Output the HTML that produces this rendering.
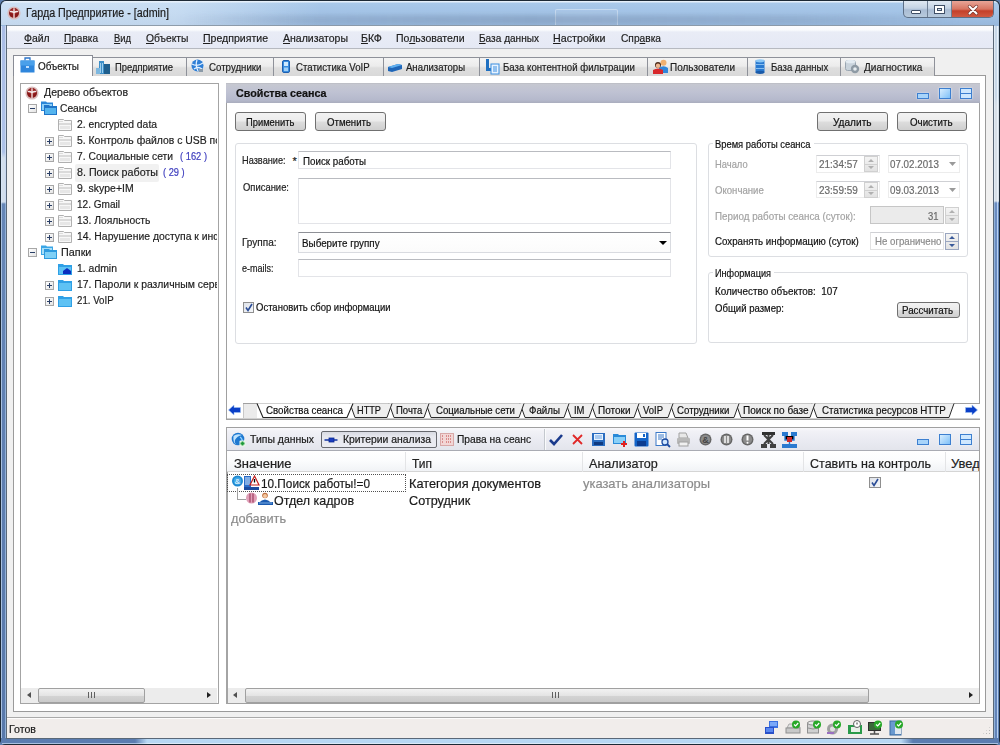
<!DOCTYPE html><html><head><meta charset='utf-8'><style>
*{box-sizing:border-box;margin:0;padding:0}
html,body{width:1000px;height:745px;overflow:hidden;background:#5d7fae}
body{position:relative;font-family:"Liberation Sans",sans-serif;color:#1e1e1e}
.a{position:absolute}
.t{position:absolute;white-space:nowrap;line-height:1;-webkit-text-stroke:0.2px currentColor}
.tab{position:absolute;height:19px;top:57px;border:1px solid #8e9199;border-bottom:none;background:linear-gradient(180deg,#f4f4f4,#ececec 45%,#dedede 55%,#d9d9d9)}
.btn{position:absolute;border:1px solid #707070;border-radius:3px;background:linear-gradient(180deg,#f2f2f2,#ebebeb 48%,#dddddd 52%,#cfcfcf)}
.gb{position:absolute;border:1px solid #dcdee2;border-radius:3px}
.inp{position:absolute;border:1px solid #e3e4e8;border-top-color:#b9bbc0;background:#fff}
.spin{position:absolute;border:1px solid #d6d6d6;background:linear-gradient(180deg,#f4f4f4,#e2e2e2)}
.sb{position:absolute;height:15px;background:#ececec}
.thumb{position:absolute;border:1px solid #a0a0a0;border-radius:2px;background:linear-gradient(180deg,#f2f2f2,#e4e4e4 50%,#d4d4d4 51%,#cacaca)}
svg{position:absolute;overflow:visible}
</style></head><body>
<div class='a' style='left:0;top:0;width:1000px;height:745px;background:#1d2a36;border-radius:6px 6px 5px 5px'></div>
<div class='a' style='left:1px;top:1px;width:998px;height:25px;border-radius:5px 5px 0 0;background:linear-gradient(180deg,#e6f0fa 0,#e6f0fa 1px,#a9c9ea 2px,#a3c3e6 12px,#98b8dc 24px)'></div>
<div class='a' style='left:1px;top:26px;width:6px;height:718px;background:linear-gradient(180deg,#aabde6 0,#aec2e8 126px,#d2deec 132px,#d2deec 176px,#6686b6 178px,#6080b2 400px,#5878aa 718px)'></div>
<div class='a' style='left:1px;top:26px;width:1px;height:718px;background:linear-gradient(180deg,#d8e6f6,#d8e6f6 176px,#a8c0e0 178px,#a8c0e0)'></div>
<div class='a' style='left:5px;top:26px;width:1px;height:718px;background:linear-gradient(180deg,#c8d8f0,#c8d8f0 176px,#90b0d8 178px,#90b0d8)'></div>
<div class='a' style='left:993px;top:26px;width:6px;height:718px;background:linear-gradient(180deg,#c8d8e8 0,#c8d8e8 70px,#d8e0e8 80px,#d8e0e8 175px,#6a8cc0 177px,#6284b8 718px)'></div>
<div class='a' style='left:994px;top:26px;width:1px;height:718px;background:linear-gradient(180deg,#e0eaf4,#e0eaf4 175px,#90b0d8 177px,#90b0d8)'></div>
<div class='a' style='left:997px;top:26px;width:1px;height:718px;background:linear-gradient(180deg,#e8f0f8,#e8f0f8 175px,#b8d0f0 177px,#b8d0f0)'></div>
<div class='a' style='left:1px;top:738px;width:998px;height:6px;background:linear-gradient(90deg,#5a7cb0 0,#5a7cb0 134px,#b8d8f4 146px,#b8d8f4 900px,#5a7cb0 912px,#5a7cb0 100%)'></div>
<div class='a' style='left:2px;top:743px;width:996px;height:1px;background:linear-gradient(90deg,#a8c0e0 0,#a8c0e0 134px,#dceaf8 146px,#dceaf8 900px,#a8c0e0 912px,#a8c0e0 100%)'></div>
<div class='a' style='left:6px;top:25px;width:988px;height:714px;border:1px solid #5a6878;background:#f0f0f0'></div>
<div class='a' style='left:7px;top:25px;width:986px;height:1px;background:#8e9caa'></div>
<div class='a' style='left:1px;top:2px;width:330px;height:23px;border-radius:5px 0 0 0;background:linear-gradient(90deg,rgba(240,248,255,.5) 0,rgba(240,248,255,.45) 175px,rgba(240,248,255,0) 320px)'></div>
<!-- blurred shapes in titlebar -->
<div class='a' style='left:555px;top:9px;width:63px;height:16px;border:1px solid rgba(225,235,248,.55);border-bottom:none;border-radius:2px 2px 0 0;background:rgba(200,215,235,.15)'></div>
<div class='a' style='left:180px;top:15px;width:780px;height:9px;background:linear-gradient(90deg,rgba(110,130,160,0),rgba(110,130,160,.22) 15%,rgba(100,120,150,.3) 45%,rgba(110,130,160,.22) 80%,rgba(110,130,160,0));filter:blur(2px)'></div>
<!-- caption buttons -->
<div class='a' style='left:903px;top:1px;width:91px;height:17px;border:1px solid #5d6f86;border-top:none;border-radius:0 0 5px 5px;overflow:hidden;background:linear-gradient(180deg,#dfe8f2,#c4d3e4 45%,#a9bcd4 55%,#b8cadc)'>
  <div class='a' style='left:23px;top:0;width:1px;height:18px;background:#6e7f94'></div>
  <div class='a' style='left:47px;top:0;width:1px;height:18px;background:#6e7f94'></div>
  <div class='a' style='left:48px;top:0;width:42px;height:18px;background:linear-gradient(180deg,#e8a597,#d77562 45%,#c4402a 55%,#d4624a)'></div>
  <div class='a' style='left:7px;top:9px;width:10px;height:4px;background:#fff;border:1px solid #3f4f66;border-radius:1px'></div>
  <div class='a' style='left:30px;top:4px;width:11px;height:9px;border:1px solid #3f4f66;background:#fff'><div class='a' style='left:2px;top:2px;width:5px;height:3px;border:1px solid #3f4f66;background:#d8e2ee'></div></div>
  <svg style='left:64px;top:4px' width='10' height='10' viewBox='0 0 10 10'><path d='M1.5 1.5 L8.5 8.5 M8.5 1.5 L1.5 8.5' stroke='#7a3a32' stroke-width='3.4' stroke-linecap='round'/><path d='M1.5 1.5 L8.5 8.5 M8.5 1.5 L1.5 8.5' stroke='#fff' stroke-width='2' stroke-linecap='round'/></svg>
</div>
<!-- title icon -->
<svg style='left:7px;top:6px' width='14' height='14' viewBox='0 0 14 14'>
 <circle cx='7' cy='7' r='6.6' fill='#d9bdbd'/><circle cx='7' cy='7' r='5' fill='#8a1818'/><circle cx='7' cy='5.5' r='3' fill='#b03a3a' opacity='.6'/>
 <path d='M7 2.2 V12 M2.8 5.6 Q5 5.2 7 6.8 Q9 5.2 11.2 5.6' stroke='#f4e8e8' stroke-width='1.3' fill='none'/>
</svg>
<div class='t' style='left:26px;top:7.30px;font-size:12px;color:#1b1b1b;transform:scaleX(0.894);transform-origin:0 0;'>Гарда Предприятие - [admin]</div>
<div class='a' style='left:7px;top:26px;width:986px;height:23px;background:linear-gradient(180deg,#fdfdfe 0,#fafbfd 4px,#e9ecf6 6px,#e5e9f5 22px);border-bottom:1px solid #b6b9c0'></div>
<div class='t' style='left:24px;top:32.65px;font-size:11px;color:#1e1e1e;transform:scaleX(0.946);transform-origin:0 0;'><span style='text-decoration:underline;text-underline-offset:1px'>Ф</span>айл</div><div class='t' style='left:64.4px;top:32.65px;font-size:11px;color:#1e1e1e;transform:scaleX(0.915);transform-origin:0 0;'><span style='text-decoration:underline;text-underline-offset:1px'>П</span>равка</div><div class='t' style='left:113.6px;top:32.65px;font-size:11px;color:#1e1e1e;transform:scaleX(0.853);transform-origin:0 0;'><span style='text-decoration:underline;text-underline-offset:1px'>В</span>ид</div><div class='t' style='left:145.6px;top:32.65px;font-size:11px;color:#1e1e1e;transform:scaleX(0.934);transform-origin:0 0;'><span style='text-decoration:underline;text-underline-offset:1px'>О</span>бъекты</div><div class='t' style='left:203px;top:32.65px;font-size:11px;color:#1e1e1e;transform:scaleX(0.959);transform-origin:0 0;'><span style='text-decoration:underline;text-underline-offset:1px'>П</span>редприятие</div><div class='t' style='left:282.5px;top:32.65px;font-size:11px;color:#1e1e1e;transform:scaleX(0.955);transform-origin:0 0;'><span style='text-decoration:underline;text-underline-offset:1px'>А</span>нализаторы</div><div class='t' style='left:361px;top:32.65px;font-size:11px;color:#1e1e1e;transform:scaleX(0.962);transform-origin:0 0;'><span style='text-decoration:underline;text-underline-offset:1px'>Б</span>КФ</div><div class='t' style='left:396px;top:32.65px;font-size:11px;color:#1e1e1e;transform:scaleX(0.954);transform-origin:0 0;'>По<span style='text-decoration:underline;text-underline-offset:1px'>л</span>ьзователи</div><div class='t' style='left:478.8px;top:32.65px;font-size:11px;color:#1e1e1e;transform:scaleX(0.916);transform-origin:0 0;'><span style='text-decoration:underline;text-underline-offset:1px'>Б</span>аза данных</div><div class='t' style='left:553px;top:32.65px;font-size:11px;color:#1e1e1e;transform:scaleX(0.973);transform-origin:0 0;'><span style='text-decoration:underline;text-underline-offset:1px'>Н</span>астройки</div><div class='t' style='left:620.5px;top:32.65px;font-size:11px;color:#1e1e1e;transform:scaleX(0.927);transform-origin:0 0;'>Спр<span style='text-decoration:underline;text-underline-offset:1px'>а</span>вка</div>
<div class='a' style='left:13px;top:75px;width:973px;height:637px;border:1px solid #9a9a9a;background:#fff'></div>
<div class='tab' style='left:92px;width:95px'></div>
<div class='tab' style='left:186px;width:88px'></div>
<div class='tab' style='left:273px;width:111px'></div>
<div class='tab' style='left:383px;width:97px'></div>
<div class='tab' style='left:479px;width:169px'></div>
<div class='tab' style='left:647px;width:101px'></div>
<div class='tab' style='left:747px;width:94px'></div>
<div class='tab' style='left:840px;width:95px'></div>
<div class='a' style='left:13px;top:55px;width:80px;height:21px;border:1px solid #898c95;border-bottom:none;background:#fff'></div>
<!-- tab icons -->
<svg style='left:20px;top:56px' width='15' height='17' viewBox='0 0 15 17'>
 <path d='M5 4.5 V2 H10 V4.5' stroke='#2c74c9' stroke-width='1.3' fill='none'/>
 <rect x='0.5' y='4.5' width='14' height='12' fill='#2f86dc'/><rect x='0.5' y='4.5' width='14' height='5' fill='#4aa0ea'/>
 <rect x='6' y='10' width='3' height='2' fill='#bfe0ff'/>
</svg>
<svg style='left:96px;top:60px' width='15' height='14' viewBox='0 0 15 14'>
 <rect x='3' y='1' width='5' height='13' fill='#3c8ec8'/><rect x='8' y='4' width='6' height='10' fill='#1f5f8e'/>
 <rect x='0' y='8' width='4' height='6' fill='#7db8e0'/>
 <path d='M4.5 3 V13 M6.5 3 V13' stroke='#b8e0f8' stroke-width='.8'/>
</svg>
<svg style='left:191px;top:59px' width='13' height='14' viewBox='0 0 13 14'>
 <circle cx='6.5' cy='6.5' r='6' fill='#2f7fd6'/><path d='M1 5 Q6 8 12 4 M3 10 Q7 7 11 10 M6 1 Q4 6 7 12' stroke='#e4f2ff' stroke-width='1.3' fill='none'/>
 <rect x='8' y='10' width='4' height='3' fill='#8a9aa8'/>
</svg>
<svg style='left:282px;top:60px' width='8' height='13' viewBox='0 0 8 13'>
 <rect x='0.5' y='0.5' width='7' height='12' rx='1.5' fill='#3a8ee0' stroke='#1d5fb0'/><rect x='2' y='2' width='4' height='4' fill='#cfeaff'/>
 <rect x='2' y='7.5' width='4' height='3.5' fill='#9fd0f8'/>
</svg>
<svg style='left:387px;top:61px' width='16' height='12' viewBox='0 0 16 12'>
 <path d='M1 6 L11 3 L15 4 L15 8 L5 11 L1 10 Z' fill='#1f66b8'/><path d='M1 6 L11 3 L15 4 L5 7 Z' fill='#5fb0f0'/>
</svg>
<svg style='left:485px;top:59px' width='14' height='15' viewBox='0 0 14 15'>
 <rect x='1' y='0' width='3' height='10' fill='#1e6fc0'/><rect x='1' y='9' width='6' height='3' fill='#1e6fc0'/>
 <rect x='6' y='5' width='8' height='10' fill='#e8f3ff' stroke='#3a8ee0'/><path d='M8 8 H12 M8 10 H12 M8 12 H12' stroke='#3a8ee0'/>
</svg>
<svg style='left:653px;top:59px' width='16' height='15' viewBox='0 0 16 15'>
 <circle cx='10.5' cy='3.8' r='3' fill='#f0b070'/><path d='M6 14 V9 Q10.5 5.5 15 9 V14 Z' fill='#2f86dc'/>
 <circle cx='5' cy='6' r='3' fill='#4a2a1a'/><circle cx='5' cy='6.8' r='2.2' fill='#f0b890'/><path d='M0 15 V11 Q5 8 10 11 V15 Z' fill='#d8282c'/>
</svg>
<svg style='left:755px;top:59px' width='10' height='15' viewBox='0 0 10 15'>
 <rect x='0.5' y='1.5' width='9' height='12' fill='#2a7ad0'/><ellipse cx='5' cy='1.8' rx='4.5' ry='1.6' fill='#8cc8f6'/><ellipse cx='5' cy='13.3' rx='4.5' ry='1.6' fill='#1a5aa8'/>
 <path d='M1 5.5 H9 M1 9.5 H9' stroke='#9fd0f8' stroke-width='.8'/>
</svg>
<svg style='left:845px;top:59px' width='15' height='15' viewBox='0 0 15 15'>
 <rect x='0.5' y='1.5' width='10' height='10' rx='2' fill='#c9d3dc' stroke='#9aa6b2'/><ellipse cx='5.5' cy='2.5' rx='5' ry='1.8' fill='#e3ebf2'/>
 <circle cx='10' cy='10' r='4.2' fill='#8e9aa4'/><circle cx='10' cy='10' r='1.8' fill='#e6ecf0'/>
</svg>
<div class='t' style='left:38px;top:61.45px;font-size:11px;color:#1a1a1a;transform:scaleX(0.904);transform-origin:0 0;'>Объекты</div><div class='t' style='left:114.8px;top:61.75px;font-size:11px;transform:scaleX(0.855);transform-origin:0 0;'>Предприятие</div><div class='t' style='left:208.5px;top:61.75px;font-size:11px;transform:scaleX(0.881);transform-origin:0 0;'>Сотрудники</div><div class='t' style='left:296px;top:61.75px;font-size:11px;transform:scaleX(0.877);transform-origin:0 0;'>Статистика VoIP</div><div class='t' style='left:406px;top:61.75px;font-size:11px;transform:scaleX(0.867);transform-origin:0 0;'>Анализаторы</div><div class='t' style='left:502.5px;top:61.75px;font-size:11px;transform:scaleX(0.877);transform-origin:0 0;'>База контентной фильтрации</div><div class='t' style='left:670px;top:61.75px;font-size:11px;transform:scaleX(0.905);transform-origin:0 0;'>Пользователи</div><div class='t' style='left:770.7px;top:61.75px;font-size:11px;transform:scaleX(0.874);transform-origin:0 0;'>База данных</div><div class='t' style='left:863.5px;top:61.75px;font-size:11px;transform:scaleX(0.917);transform-origin:0 0;'>Диагностика</div>
<div class='a' style='left:20px;top:83px;width:199px;height:621px;border:1px solid #a4a4a4;background:#fff'></div>
<div class='a' style='left:75px;top:164px;width:84px;height:18px;background:#f1f1f1;border-radius:2px'></div>
<svg style='left:25px;top:86px' width='14' height='14' viewBox='0 0 14 14'>
 <circle cx='7' cy='7' r='6.6' fill='#d9bdbd'/><circle cx='7' cy='7' r='5' fill='#8a1818'/><circle cx='7' cy='5.5' r='3' fill='#b03a3a' opacity='.6'/>
 <path d='M7 2.2 V12 M2.8 5.6 Q5 5.2 7 6.8 Q9 5.2 11.2 5.6' stroke='#f4e8e8' stroke-width='1.3' fill='none'/>
</svg>
<svg style='left:41px;top:101px' width='16' height='14' viewBox='0 0 16 14'>
 <path d='M0 0.5 H5 L6 1.5 H12 V10 H0 Z' fill='#2a86d8'/><rect x='1' y='3' width='10' height='6' fill='#8fd0f8'/>
 <path d='M3 4 H8 L9 5 H16 V14 H3 Z' fill='#1f74c8'/><rect x='4' y='7' width='11' height='6' fill='#54b4ee'/>
</svg>
<svg style='left:41px;top:245px' width='16' height='14' viewBox='0 0 16 14'>
 <path d='M0 0.5 H5 L6 1.5 H12 V10 H0 Z' fill='#3aa6e6'/><rect x='1' y='3' width='10' height='6' fill='#a8def8'/>
 <path d='M3 4 H8 L9 5 H16 V14 H3 Z' fill='#2d9ade'/><rect x='4' y='7' width='11' height='6' fill='#7fd0f6'/>
</svg>
<div class='a' style='left:28px;top:104px;width:9px;height:9px;border:1px solid #a7a7a7;background:linear-gradient(135deg,#fff,#e4e4e4)'></div><div class='a' style='left:30px;top:108px;width:5px;height:1px;background:#2a3f66'></div><div class='a' style='left:28px;top:248px;width:9px;height:9px;border:1px solid #a7a7a7;background:linear-gradient(135deg,#fff,#e4e4e4)'></div><div class='a' style='left:30px;top:252px;width:5px;height:1px;background:#2a3f66'></div><svg style='left:58px;top:119px' width='14' height='12' viewBox='0 0 14 12'><path d='M0.5 11.5 V0.5 H5.5 L6.5 1.5 H13.5 V11.5 Z' fill='#f7f7f7' stroke='#b0b0b0'/><path d='M1 5 H13' stroke='#bdbdbd'/><rect x='2' y='7' width='10' height='3' fill='#e6e6e6'/><path d='M1 2.5 H5' stroke='#dcdcdc'/></svg><svg style='left:58px;top:135px' width='14' height='12' viewBox='0 0 14 12'><path d='M0.5 11.5 V0.5 H5.5 L6.5 1.5 H13.5 V11.5 Z' fill='#f7f7f7' stroke='#b0b0b0'/><path d='M1 5 H13' stroke='#bdbdbd'/><rect x='2' y='7' width='10' height='3' fill='#e6e6e6'/><path d='M1 2.5 H5' stroke='#dcdcdc'/></svg><div class='a' style='left:45px;top:137px;width:9px;height:9px;border:1px solid #a7a7a7;background:linear-gradient(135deg,#fff,#e4e4e4)'></div><div class='a' style='left:47px;top:141px;width:5px;height:1px;background:#2a3f66'></div><div class='a' style='left:49px;top:139px;width:1px;height:5px;background:#2a3f66'></div><svg style='left:58px;top:151px' width='14' height='12' viewBox='0 0 14 12'><path d='M0.5 11.5 V0.5 H5.5 L6.5 1.5 H13.5 V11.5 Z' fill='#f7f7f7' stroke='#b0b0b0'/><path d='M1 5 H13' stroke='#bdbdbd'/><rect x='2' y='7' width='10' height='3' fill='#e6e6e6'/><path d='M1 2.5 H5' stroke='#dcdcdc'/></svg><div class='a' style='left:45px;top:153px;width:9px;height:9px;border:1px solid #a7a7a7;background:linear-gradient(135deg,#fff,#e4e4e4)'></div><div class='a' style='left:47px;top:157px;width:5px;height:1px;background:#2a3f66'></div><div class='a' style='left:49px;top:155px;width:1px;height:5px;background:#2a3f66'></div><svg style='left:58px;top:167px' width='14' height='12' viewBox='0 0 14 12'><path d='M0.5 11.5 V0.5 H5.5 L6.5 1.5 H13.5 V11.5 Z' fill='#f7f7f7' stroke='#b0b0b0'/><path d='M1 5 H13' stroke='#bdbdbd'/><rect x='2' y='7' width='10' height='3' fill='#e6e6e6'/><path d='M1 2.5 H5' stroke='#dcdcdc'/></svg><div class='a' style='left:45px;top:169px;width:9px;height:9px;border:1px solid #a7a7a7;background:linear-gradient(135deg,#fff,#e4e4e4)'></div><div class='a' style='left:47px;top:173px;width:5px;height:1px;background:#2a3f66'></div><div class='a' style='left:49px;top:171px;width:1px;height:5px;background:#2a3f66'></div><svg style='left:58px;top:183px' width='14' height='12' viewBox='0 0 14 12'><path d='M0.5 11.5 V0.5 H5.5 L6.5 1.5 H13.5 V11.5 Z' fill='#f7f7f7' stroke='#b0b0b0'/><path d='M1 5 H13' stroke='#bdbdbd'/><rect x='2' y='7' width='10' height='3' fill='#e6e6e6'/><path d='M1 2.5 H5' stroke='#dcdcdc'/></svg><div class='a' style='left:45px;top:185px;width:9px;height:9px;border:1px solid #a7a7a7;background:linear-gradient(135deg,#fff,#e4e4e4)'></div><div class='a' style='left:47px;top:189px;width:5px;height:1px;background:#2a3f66'></div><div class='a' style='left:49px;top:187px;width:1px;height:5px;background:#2a3f66'></div><svg style='left:58px;top:199px' width='14' height='12' viewBox='0 0 14 12'><path d='M0.5 11.5 V0.5 H5.5 L6.5 1.5 H13.5 V11.5 Z' fill='#f7f7f7' stroke='#b0b0b0'/><path d='M1 5 H13' stroke='#bdbdbd'/><rect x='2' y='7' width='10' height='3' fill='#e6e6e6'/><path d='M1 2.5 H5' stroke='#dcdcdc'/></svg><div class='a' style='left:45px;top:201px;width:9px;height:9px;border:1px solid #a7a7a7;background:linear-gradient(135deg,#fff,#e4e4e4)'></div><div class='a' style='left:47px;top:205px;width:5px;height:1px;background:#2a3f66'></div><div class='a' style='left:49px;top:203px;width:1px;height:5px;background:#2a3f66'></div><svg style='left:58px;top:215px' width='14' height='12' viewBox='0 0 14 12'><path d='M0.5 11.5 V0.5 H5.5 L6.5 1.5 H13.5 V11.5 Z' fill='#f7f7f7' stroke='#b0b0b0'/><path d='M1 5 H13' stroke='#bdbdbd'/><rect x='2' y='7' width='10' height='3' fill='#e6e6e6'/><path d='M1 2.5 H5' stroke='#dcdcdc'/></svg><div class='a' style='left:45px;top:217px;width:9px;height:9px;border:1px solid #a7a7a7;background:linear-gradient(135deg,#fff,#e4e4e4)'></div><div class='a' style='left:47px;top:221px;width:5px;height:1px;background:#2a3f66'></div><div class='a' style='left:49px;top:219px;width:1px;height:5px;background:#2a3f66'></div><svg style='left:58px;top:231px' width='14' height='12' viewBox='0 0 14 12'><path d='M0.5 11.5 V0.5 H5.5 L6.5 1.5 H13.5 V11.5 Z' fill='#f7f7f7' stroke='#b0b0b0'/><path d='M1 5 H13' stroke='#bdbdbd'/><rect x='2' y='7' width='10' height='3' fill='#e6e6e6'/><path d='M1 2.5 H5' stroke='#dcdcdc'/></svg><div class='a' style='left:45px;top:233px;width:9px;height:9px;border:1px solid #a7a7a7;background:linear-gradient(135deg,#fff,#e4e4e4)'></div><div class='a' style='left:47px;top:237px;width:5px;height:1px;background:#2a3f66'></div><div class='a' style='left:49px;top:235px;width:1px;height:5px;background:#2a3f66'></div><svg style='left:58px;top:263px' width='14' height='12' viewBox='0 0 14 12'><path d='M0 1 H5 L6 2 H14 V12 H0 Z' fill='#2fa0e6'/><rect x='1' y='4' width='12' height='7' fill='#5ec2f4'/><path d='M5 11 V8 L9 5 L13 8 V11 Z' fill='#0a2fbf'/></svg><svg style='left:58px;top:279px' width='14' height='12' viewBox='0 0 14 12'><path d='M0 1 H5 L6 2 H14 V12 H0 Z' fill='#2fa0e6'/><rect x='1' y='4' width='12' height='7' fill='#5ec2f4'/></svg><div class='a' style='left:45px;top:281px;width:9px;height:9px;border:1px solid #a7a7a7;background:linear-gradient(135deg,#fff,#e4e4e4)'></div><div class='a' style='left:47px;top:285px;width:5px;height:1px;background:#2a3f66'></div><div class='a' style='left:49px;top:283px;width:1px;height:5px;background:#2a3f66'></div><svg style='left:58px;top:295px' width='14' height='12' viewBox='0 0 14 12'><path d='M0 1 H5 L6 2 H14 V12 H0 Z' fill='#2fa0e6'/><rect x='1' y='4' width='12' height='7' fill='#5ec2f4'/></svg><div class='a' style='left:45px;top:297px;width:9px;height:9px;border:1px solid #a7a7a7;background:linear-gradient(135deg,#fff,#e4e4e4)'></div><div class='a' style='left:47px;top:301px;width:5px;height:1px;background:#2a3f66'></div><div class='a' style='left:49px;top:299px;width:1px;height:5px;background:#2a3f66'></div><div class='a' style='left:21px;top:84px;width:196px;height:600px;overflow:hidden'><div class='a' style='left:-21px;top:-84px;width:1000px;height:700px'><div class='t' style='left:43.5px;top:86.26px;font-size:11.7px;transform:scaleX(0.903);transform-origin:0 0;'>Дерево объектов</div><div class='t' style='left:60.3px;top:102.26px;font-size:11.7px;transform:scaleX(0.878);transform-origin:0 0;'>Сеансы</div><div class='t' style='left:77px;top:118.25px;font-size:11.7px;transform:scaleX(0.886);transform-origin:0 0;'>2. encrypted data</div><div class='t' style='left:77px;top:134.25px;font-size:11.7px;transform:scaleX(0.890);transform-origin:0 0;'>5. Контроль файлов с USB портов</div><div class='t' style='left:77px;top:150.25px;font-size:11.7px;transform:scaleX(0.881);transform-origin:0 0;'>7. Социальные сети</div><div class='t' style='left:179.5px;top:150.25px;font-size:11.7px;color:#3b3bbd;transform:scaleX(0.799);transform-origin:0 0;'>( 162 )</div><div class='t' style='left:77px;top:166.25px;font-size:11.7px;transform:scaleX(0.917);transform-origin:0 0;'>8. Поиск работы</div><div class='t' style='left:163.3px;top:166.25px;font-size:11.7px;color:#3b3bbd;transform:scaleX(0.795);transform-origin:0 0;'>( 29 )</div><div class='t' style='left:77px;top:182.25px;font-size:11.7px;transform:scaleX(0.894);transform-origin:0 0;'>9. skype+IM</div><div class='t' style='left:77px;top:198.25px;font-size:11.7px;transform:scaleX(0.860);transform-origin:0 0;'>12. Gmail</div><div class='t' style='left:77px;top:214.25px;font-size:11.7px;transform:scaleX(0.883);transform-origin:0 0;'>13. Лояльность</div><div class='t' style='left:77px;top:230.25px;font-size:11.7px;transform:scaleX(0.890);transform-origin:0 0;'>14. Нарушение доступа к информации</div><div class='t' style='left:60.6px;top:246.25px;font-size:11.7px;transform:scaleX(0.925);transform-origin:0 0;'>Папки</div><div class='t' style='left:77px;top:262.25px;font-size:11.7px;transform:scaleX(0.892);transform-origin:0 0;'>1. admin</div><div class='t' style='left:77px;top:278.25px;font-size:11.7px;transform:scaleX(0.890);transform-origin:0 0;'>17. Пароли к различным сервисам</div><div class='t' style='left:77px;top:294.25px;font-size:11.7px;transform:scaleX(0.828);transform-origin:0 0;'>21. VoIP</div></div></div>
<div class='sb' style='left:21px;top:688px;width:196px'></div>
<svg style='left:27px;top:692px' width='4' height='6' viewBox='0 0 4 6'><path d='M4 0 V6 L0 3 Z' fill='#505050'/></svg>
<svg style='left:207px;top:692px' width='4' height='6' viewBox='0 0 4 6'><path d='M0 0 V6 L4 3 Z' fill='#202020'/></svg>
<div class='thumb' style='left:38px;top:688px;width:107px;height:15px'></div>
<div class='a' style='left:88px;top:692px;width:7px;height:6px;background:repeating-linear-gradient(90deg,#606060 0 1px,transparent 1px 3px)'></div>

<div class='a' style='left:226px;top:83px;width:754px;height:337px;border:1px solid #a0a0a0;background:#fff'></div>
<div class='a' style='left:226px;top:83px;width:754px;height:20px;background:linear-gradient(180deg,#b6b7bd 0,#c6c8d1 1px,#bfc2d3 45%,#b5b9cc 85%,#aaadbd 100%)'></div>
<!-- header icons -->
<div class='a' style='left:917px;top:93px;width:12px;height:6px;border:1px solid #3d7fd0;background:#a8d4fa;box-shadow:0 0 2px #e8f4ff'></div>
<div class='a' style='left:939px;top:88px;width:12px;height:11px;border:1px solid #3d7fd0;background:linear-gradient(135deg,#d8eeff,#7ec0f8);box-shadow:0 0 2px #e8f4ff'></div>
<div class='a' style='left:960px;top:88px;width:12px;height:11px;border:1px solid #3d7fd0;background:#cfe8ff;box-shadow:0 0 2px #e8f4ff'><div class='a' style='left:0;top:4px;width:10px;height:1px;background:#3d7fd0'></div></div>
<div class='btn' style='left:235px;top:112px;width:71px;height:19px'></div>
<div class='btn' style='left:315px;top:112px;width:71px;height:19px'></div>
<div class='btn' style='left:817px;top:112px;width:71px;height:19px'></div>
<div class='btn' style='left:897px;top:112px;width:70px;height:19px'></div>
<div class='gb' style='left:235px;top:143px;width:462px;height:201px'></div>
<div class='gb' style='left:708px;top:143px;width:260px;height:114px'></div>
<div class='gb' style='left:708px;top:272px;width:260px;height:71px'></div>
<div class='a' style='left:713px;top:139px;width:101px;height:9px;background:#fff'></div>
<div class='a' style='left:713px;top:268px;width:61px;height:9px;background:#fff'></div>
<div class='inp' style='left:298px;top:151px;width:373px;height:18px'></div>
<div class='inp' style='left:298px;top:178px;width:373px;height:46px'></div>
<div class='inp' style='left:298px;top:232px;width:373px;height:21px;border-color:#d9dbe0;border-top-color:#8e9096;background:linear-gradient(180deg,#fff,#fbfbfb)'></div>
<svg style='left:659px;top:241px' width='8' height='4' viewBox='0 0 8 4'><path d='M0 0 H8 L4 4 Z' fill='#000'/></svg>
<div class='inp' style='left:298px;top:259px;width:373px;height:18px'></div>
<div class='a' style='left:243px;top:302px;width:11px;height:11px;border:1px solid #8f8f8f;background:linear-gradient(135deg,#dfe3ea,#f4f6f9)'></div>
<svg style='left:245px;top:303px' width='8' height='9' viewBox='0 0 8 9'><path d='M1 4.5 L3 7.5 L7 1' stroke='#2a4c96' stroke-width='1.6' fill='none'/></svg>
<!-- time -->
<div class='inp' style='left:816px;top:155px;width:64px;height:18px;border-color:#ececec;border-top-color:#cfd0d4'></div>
<div class='inp' style='left:888px;top:155px;width:72px;height:18px;border-color:#ececec;border-top-color:#cfd0d4'></div>
<div class='inp' style='left:816px;top:181px;width:64px;height:17px;border-color:#ececec;border-top-color:#cfd0d4'></div>
<div class='inp' style='left:888px;top:181px;width:72px;height:17px;border-color:#ececec;border-top-color:#cfd0d4'></div>
<svg style='left:949px;top:162px' width='7' height='4' viewBox='0 0 7 4'><path d='M0 0 H7 L3.5 4 Z' fill='#9a9a9a'/></svg>
<svg style='left:949px;top:188px' width='7' height='4' viewBox='0 0 7 4'><path d='M0 0 H7 L3.5 4 Z' fill='#9a9a9a'/></svg>
<div class='inp' style='left:870px;top:206px;width:74px;height:18px;border-color:#c6c6c6;background:#ebebeb'></div>
<div class='inp' style='left:870px;top:232px;width:74px;height:18px;border-color:#e2e2e2;border-top-color:#cfd0d4'></div>
<div class='spin' style='left:864px;top:156px;width:14px;height:16px;border-color:#d0d0d0'></div><div class='a' style='left:865px;top:164px;width:12px;height:1px;background:#d0d0d0'></div><svg style='left:868.0px;top:158px' width='6' height='12' viewBox='0 0 6 12'><path d='M0 4 L3 1 L6 4 Z M0 8 L3 11 L6 8 Z' fill='#b0b0b0'/></svg><div class='spin' style='left:864px;top:182px;width:14px;height:16px;border-color:#d0d0d0'></div><div class='a' style='left:865px;top:190px;width:12px;height:1px;background:#d0d0d0'></div><svg style='left:868.0px;top:184px' width='6' height='12' viewBox='0 0 6 12'><path d='M0 4 L3 1 L6 4 Z M0 8 L3 11 L6 8 Z' fill='#b0b0b0'/></svg><div class='spin' style='left:945px;top:207px;width:14px;height:17px;border-color:#d0d0d0'></div><div class='a' style='left:946px;top:215px;width:12px;height:1px;background:#d0d0d0'></div><svg style='left:949.0px;top:209px' width='6' height='13' viewBox='0 0 6 13'><path d='M0 4 L3 1 L6 4 Z M0 9 L3 12 L6 9 Z' fill='#b0b0b0'/></svg><div class='spin' style='left:945px;top:233px;width:14px;height:17px;border-color:#9aa6c0'></div><div class='a' style='left:946px;top:241px;width:12px;height:1px;background:#9aa6c0'></div><svg style='left:949.0px;top:235px' width='6' height='13' viewBox='0 0 6 13'><path d='M0 4 L3 1 L6 4 Z M0 9 L3 12 L6 9 Z' fill='#3a5a9a'/></svg>
<div class='btn' style='left:897px;top:302px;width:63px;height:16px'></div>
<div class='t' style='left:236px;top:89.30px;font-size:10px;font-weight:700;color:#111;transform:scaleX(1.074);transform-origin:0 0;'>Свойства сеанса</div><div class='t' style='left:245.6px;top:117.45px;font-size:11px;color:#111;transform:scaleX(0.851);transform-origin:0 0;'>Применить</div><div class='t' style='left:327px;top:117.45px;font-size:11px;color:#111;transform:scaleX(0.875);transform-origin:0 0;'>Отменить</div><div class='t' style='left:832.5px;top:117.45px;font-size:11px;color:#111;transform:scaleX(0.917);transform-origin:0 0;'>Удалить</div><div class='t' style='left:910px;top:117.45px;font-size:11px;color:#111;transform:scaleX(0.887);transform-origin:0 0;'>Очистить</div><div class='t' style='left:242.4px;top:155.45px;font-size:11px;color:#222;transform:scaleX(0.835);transform-origin:0 0;'>Название:</div><div class='t' style='left:292.5px;top:155.95px;font-size:11px;color:#222;'>*</div><div class='t' style='left:303px;top:155.95px;font-size:11px;color:#111;transform:scaleX(0.888);transform-origin:0 0;'>Поиск работы</div><div class='t' style='left:243px;top:182.45px;font-size:11px;color:#222;transform:scaleX(0.857);transform-origin:0 0;'>Описание:</div><div class='t' style='left:242.4px;top:237.45px;font-size:11px;color:#222;transform:scaleX(0.912);transform-origin:0 0;'>Группа:</div><div class='t' style='left:302.4px;top:238.45px;font-size:11px;color:#111;transform:scaleX(0.894);transform-origin:0 0;'>Выберите группу</div><div class='t' style='left:242.4px;top:262.95px;font-size:11px;color:#222;transform:scaleX(0.820);transform-origin:0 0;'>e-mails:</div><div class='t' style='left:256.4px;top:302.45px;font-size:11px;color:#111;transform:scaleX(0.863);transform-origin:0 0;'>Остановить сбор информации</div><div class='t' style='left:715.4px;top:138.95px;font-size:11px;color:#111;transform:scaleX(0.852);transform-origin:0 0;'>Время работы сеанса</div><div class='t' style='left:715.4px;top:159.45px;font-size:11px;color:#a3a3a3;transform:scaleX(0.851);transform-origin:0 0;'>Начало</div><div class='t' style='left:715.4px;top:184.95px;font-size:11px;color:#a3a3a3;transform:scaleX(0.873);transform-origin:0 0;'>Окончание</div><div class='t' style='left:715.4px;top:210.95px;font-size:11px;color:#a3a3a3;transform:scaleX(0.892);transform-origin:0 0;'>Период работы сеанса (суток):</div><div class='t' style='left:715.4px;top:236.45px;font-size:11px;color:#111;transform:scaleX(0.884);transform-origin:0 0;'>Сохранять информацию (суток)</div><div class='t' style='left:818.5px;top:159.45px;font-size:11px;color:#6a6a6a;transform:scaleX(0.906);transform-origin:0 0;'>21:34:57</div><div class='t' style='left:890px;top:159.45px;font-size:11px;color:#6a6a6a;transform:scaleX(0.890);transform-origin:0 0;'>07.02.2013</div><div class='t' style='left:818.5px;top:184.95px;font-size:11px;color:#6a6a6a;transform:scaleX(0.906);transform-origin:0 0;'>23:59:59</div><div class='t' style='left:890px;top:184.95px;font-size:11px;color:#6a6a6a;transform:scaleX(0.890);transform-origin:0 0;'>09.03.2013</div><div class='t' style='left:928.2px;top:210.95px;font-size:11px;color:#6a6a6a;transform:scaleX(0.857);transform-origin:0 0;'>31</div><div class='t' style='left:874.6px;top:236.45px;font-size:11px;color:#8a8a8a;transform:scaleX(0.877);transform-origin:0 0;'>Не ограничено</div><div class='t' style='left:715.4px;top:268.45px;font-size:11px;color:#111;transform:scaleX(0.831);transform-origin:0 0;'>Информация</div><div class='t' style='left:715px;top:286.45px;font-size:11px;color:#111;transform:scaleX(0.900);transform-origin:0 0;'>Количество объектов:&nbsp; 107</div><div class='t' style='left:715px;top:302.95px;font-size:11px;color:#111;transform:scaleX(0.870);transform-origin:0 0;'>Общий размер:</div><div class='t' style='left:902.2px;top:305.45px;font-size:11px;color:#111;transform:scaleX(0.888);transform-origin:0 0;'>Рассчитать</div><div class='a' style='left:227px;top:403px;width:753px;height:15px;background:#fff'></div><div class='a' style='left:243px;top:403px;width:14px;height:15px;background:#ebebeb;border-left:1px solid #c8c8c8'></div><div class='a' style='left:243px;top:403px;width:737px;height:1px;background:#a0a0a0'></div><div class='a' style='left:227px;top:418px;width:753px;height:1px;background:#cfcfcf'></div><svg style='left:0;top:0' width='1000' height='745' viewBox='0 0 1000 745'><path d='M812 403.5 L817 417.5 L949 417.5 L954 403.5' fill='#efefef' stroke='#2a2a2a' stroke-width='1'/><path d='M736 403.5 L741 417.5 L810 417.5 L815 403.5' fill='#efefef' stroke='#2a2a2a' stroke-width='1'/><path d='M670 403.5 L675 417.5 L734 417.5 L739 403.5' fill='#efefef' stroke='#2a2a2a' stroke-width='1'/><path d='M636 403.5 L641 417.5 L668 417.5 L673 403.5' fill='#efefef' stroke='#2a2a2a' stroke-width='1'/><path d='M591 403.5 L596 417.5 L634 417.5 L639 403.5' fill='#efefef' stroke='#2a2a2a' stroke-width='1'/><path d='M566 403.5 L571 417.5 L589 417.5 L594 403.5' fill='#efefef' stroke='#2a2a2a' stroke-width='1'/><path d='M520 403.5 L525 417.5 L564 417.5 L569 403.5' fill='#efefef' stroke='#2a2a2a' stroke-width='1'/><path d='M426 403.5 L431 417.5 L519 417.5 L524 403.5' fill='#efefef' stroke='#2a2a2a' stroke-width='1'/><path d='M389 403.5 L394 417.5 L424 417.5 L429 403.5' fill='#efefef' stroke='#2a2a2a' stroke-width='1'/><path d='M350 403.5 L355 417.5 L387 417.5 L392 403.5' fill='#efefef' stroke='#2a2a2a' stroke-width='1'/><path d='M257 403.5 L263 417.5 L347 417.5 L353 403.5 Z' fill='#fff' stroke='none'/><path d='M257 403.5 L263 417.5 L347 417.5 L353 403.5' fill='none' stroke='#202020' stroke-width='1.1'/></svg><svg style='left:228px;top:404px' width='13' height='12' viewBox='0 0 13 12'><path d='M0.5 6 L6 1 V3.5 H12.5 V8.5 H6 V11 Z' fill='#0a3fc8' stroke='#9ec0f0' stroke-width='.6'/></svg><svg style='left:965px;top:404px' width='13' height='12' viewBox='0 0 13 12'><path d='M12.5 6 L7 1 V3.5 H0.5 V8.5 H7 V11 Z' fill='#0a3fc8' stroke='#9ec0f0' stroke-width='.6'/></svg><div class='t' style='left:266px;top:404.85px;font-size:11px;color:#111;transform:scaleX(0.887);transform-origin:0 0;'>Свойства сеанса</div><div class='t' style='left:357.4px;top:404.85px;font-size:11px;color:#111;transform:scaleX(0.835);transform-origin:0 0;'>HTTP</div><div class='t' style='left:395.6px;top:404.85px;font-size:11px;color:#111;transform:scaleX(0.864);transform-origin:0 0;'>Почта</div><div class='t' style='left:435.5px;top:404.85px;font-size:11px;color:#111;transform:scaleX(0.874);transform-origin:0 0;'>Социальные сети</div><div class='t' style='left:529px;top:404.85px;font-size:11px;color:#111;transform:scaleX(0.887);transform-origin:0 0;'>Файлы</div><div class='t' style='left:573.5px;top:404.85px;font-size:11px;color:#111;transform:scaleX(0.858);transform-origin:0 0;'>IM</div><div class='t' style='left:598px;top:404.85px;font-size:11px;color:#111;transform:scaleX(0.908);transform-origin:0 0;'>Потоки</div><div class='t' style='left:643.4px;top:404.85px;font-size:11px;color:#111;transform:scaleX(0.860);transform-origin:0 0;'>VoIP</div><div class='t' style='left:677px;top:404.85px;font-size:11px;color:#111;transform:scaleX(0.878);transform-origin:0 0;'>Сотрудники</div><div class='t' style='left:743px;top:404.85px;font-size:11px;color:#111;transform:scaleX(0.913);transform-origin:0 0;'>Поиск по базе</div><div class='t' style='left:821.7px;top:404.85px;font-size:11px;color:#111;transform:scaleX(0.888);transform-origin:0 0;'>Статистика ресурсов HTTP</div>
<div class='a' style='left:226px;top:427px;width:754px;height:277px;border:1px solid #a0a0a0;border-left:2px solid #a4a4a4;background:#fff'></div>
<div class='a' style='left:227px;top:428px;width:752px;height:23px;background:linear-gradient(180deg,#f9f9fc 0,#f1f1f6 15%,#e9eaf1 60%,#e3e5ec 100%);border-bottom:1px solid #a9abb3'></div>
<div class='a' style='left:227px;top:451px;width:752px;height:21px;background:linear-gradient(180deg,#ffffff 0,#fbfcfd 50%,#f1f3f6 100%);border-bottom:1px solid #d5d5d5'></div>
<div class='a' style='left:405px;top:452px;width:1px;height:20px;background:#e3e4e6'></div>
<div class='a' style='left:582px;top:452px;width:1px;height:20px;background:#e3e4e6'></div>
<div class='a' style='left:803px;top:452px;width:1px;height:20px;background:#e3e4e6'></div>
<div class='a' style='left:945px;top:452px;width:1px;height:20px;background:#e3e4e6'></div>
<div class='a' style='left:321px;top:431px;width:116px;height:17px;border:1px solid #66686e;border-radius:2px;background:linear-gradient(180deg,#d8dae2,#e6e7ee 30%,#ebecf2)'></div>
<div class='a' style='left:544px;top:429px;width:1px;height:21px;background:#c4c8ce'></div>
<div class='a' style='left:545px;top:429px;width:1px;height:21px;background:#fafbfc'></div>
<svg style='left:231px;top:432px' width='15' height='15' viewBox='0 0 15 15'>
 <circle cx='7' cy='7' r='6.3' fill='#1e78d0'/><path d='M2.5 4 Q6 1 11 3 Q6 4 4 8 Q3 11 6 13 Q1.5 11 2.5 4 Z' fill='#bfe4ff'/><path d='M9 5 Q12 7 11 11' stroke='#8fd0ff' stroke-width='1.4' fill='none'/>
 <rect x='8.5' y='8.5' width='6' height='6' rx='1' fill='#e8f8e8'/><path d='M11.5 9.5 V13.5 M9.5 11.5 H13.5' stroke='#1f9a3a' stroke-width='1.8'/>
</svg>
<svg style='left:324px;top:436px' width='14' height='8' viewBox='0 0 14 8'><path d='M0.5 4 H13.5' stroke='#1030a0' stroke-width='1.5'/><rect x='5' y='2' width='5' height='4' fill='#1a3cc0' stroke='#0a2a90' stroke-width='.8'/></svg>
<svg style='left:440px;top:433px' width='14' height='13' viewBox='0 0 14 13'><rect x='0.5' y='0.5' width='13' height='12' fill='#f2d6d6' stroke='#d8a8a8'/><path d='M2 3 H4 M6 3 H12 M2 6 H4 M6 6 H12 M2 9 H4 M6 9 H12' stroke='#c04040' stroke-dasharray='1 1'/></svg>
<svg style='left:549px;top:433px' width='16' height='16' viewBox='0 0 16 16'><path d='M1 7 L5 11 L13 2' stroke='#1a3a8c' stroke-width='2.6' fill='none'/></svg><svg style='left:571px;top:433px' width='16' height='16' viewBox='0 0 16 16'><path d='M2 2 L11 11 M11 2 L2 11' stroke='#e02828' stroke-width='1.8' fill='none'/></svg><svg style='left:591px;top:432px' width='16' height='16' viewBox='0 0 16 16'><rect x='1' y='1' width='13' height='13' fill='#2a6cc0'/><rect x='3' y='2' width='9' height='6' fill='#e6f2ff'/><rect x='3' y='10' width='9' height='3' fill='#103a80'/><path d='M4 4 H11 M4 6 H11' stroke='#6aa0e0'/></svg><svg style='left:613px;top:432px' width='16' height='16' viewBox='0 0 16 16'><path d='M0 2 H5 L6 3 H13 V12 H0 Z' fill='#2a8ad8'/><rect x='1' y='5' width='11' height='6' fill='#8ad0f8'/><path d='M11 9 V15 M8 12 H14' stroke='#e02020' stroke-width='2'/></svg><svg style='left:634px;top:432px' width='16' height='16' viewBox='0 0 16 16'><rect x='0.5' y='0.5' width='14' height='14' rx='1' fill='#1464c8'/><rect x='3' y='1' width='9' height='5' fill='#fff'/><rect x='3' y='9' width='9' height='5' fill='#0c3c90'/><rect x='9' y='2' width='2' height='3' fill='#1464c8'/></svg><svg style='left:655px;top:432px' width='16' height='16' viewBox='0 0 16 16'><rect x='1' y='0.5' width='10' height='13' fill='#fff' stroke='#3a78c8'/><path d='M3 3 H9 M3 5 H9 M3 7 H7' stroke='#3a78c8'/><circle cx='10' cy='10' r='3' fill='#cfe6ff' stroke='#1c4aa0' stroke-width='1.3'/><path d='M12 12 L15 15' stroke='#1c4aa0' stroke-width='1.8'/></svg><svg style='left:676px;top:432px' width='16' height='16' viewBox='0 0 16 16'><path d='M3 1 H10 L12 6 H3 Z' fill='#e8e8e8' stroke='#a0a0a0'/><rect x='1' y='6' width='13' height='6' rx='1' fill='#b8b8b8'/><rect x='3' y='10' width='9' height='4' fill='#f0f0f0' stroke='#a0a0a0'/></svg><svg style='left:699px;top:432px' width='16' height='16' viewBox='0 0 16 16'><circle cx='6.5' cy='7.5' r='6' fill='#666'/><circle cx='6.5' cy='7.5' r='4.6' fill='#8c8c8c'/><text x='6.5' y='11' font-size='9' text-anchor='middle' fill='#444' font-family='Liberation Sans' font-weight='bold'>&amp;</text></svg><svg style='left:720px;top:432px' width='16' height='16' viewBox='0 0 16 16'><circle cx='6.5' cy='7.5' r='6' fill='#666'/><circle cx='6.5' cy='7.5' r='4.6' fill='#8c8c8c'/><path d='M5 4 V11 M8 4 V11' stroke='#fff' stroke-width='1.4'/></svg><svg style='left:741px;top:432px' width='16' height='16' viewBox='0 0 16 16'><circle cx='6.5' cy='7.5' r='6' fill='#666'/><circle cx='6.5' cy='7.5' r='4.6' fill='#8c8c8c'/><path d='M6.5 3.5 V8.5' stroke='#fff' stroke-width='2'/><circle cx='6.5' cy='10.8' r='1' fill='#fff'/></svg><svg style='left:761px;top:432px' width='16' height='16' viewBox='0 0 16 16'><rect x='1' y='0' width='13' height='3' fill='#303030'/><path d='M3 3 L12 12 M12 3 L3 12 M7.5 3 V12' stroke='#404040' stroke-width='2'/><rect x='0' y='12' width='6' height='4' fill='#404040'/><rect x='9' y='12' width='6' height='4' fill='#404040'/></svg><svg style='left:782px;top:432px' width='16' height='16' viewBox='0 0 16 16'><rect x='0' y='0' width='6' height='4' fill='#2a7ad0'/><rect x='9' y='0' width='6' height='4' fill='#2a7ad0'/><path d='M3 4 V8 H12 V4 M7.5 8 V12' stroke='#2a7ad0' stroke-width='1.4'/><rect x='5' y='5' width='5' height='5' fill='#d02828'/><rect x='0' y='12' width='15' height='4' fill='#2a7ad0'/></svg>
<div class='a' style='left:917px;top:439px;width:12px;height:6px;border:1px solid #3d7fd0;background:#a8d4fa;box-shadow:0 0 2px #e8f4ff'></div>
<div class='a' style='left:939px;top:434px;width:12px;height:11px;border:1px solid #3d7fd0;background:linear-gradient(135deg,#d8eeff,#7ec0f8);box-shadow:0 0 2px #e8f4ff'></div>
<div class='a' style='left:960px;top:434px;width:12px;height:11px;border:1px solid #3d7fd0;background:#cfe8ff;box-shadow:0 0 2px #e8f4ff'><div class='a' style='left:0;top:4px;width:10px;height:1px;background:#3d7fd0'></div></div>
<!-- rows -->
<div class='a' style='left:227px;top:474px;width:179px;height:18px;border:1px dotted #505050'></div>
<svg style='left:231px;top:475px' width='30' height='16' viewBox='0 0 30 16'>
 <circle cx='6.5' cy='6' r='5.5' fill='#1e88d0'/><circle cx='6.5' cy='6' r='3.8' fill='#42a8e8'/><text x='6.5' y='9' font-size='8' text-anchor='middle' fill='#fff' font-family='Liberation Sans'>&amp;</text>
 <rect x='13' y='1' width='7' height='13' fill='#2a6cc8'/><path d='M14 3 H19 M14 5 H19 M14 7 H19 M14 9 H19' stroke='#d8ecff'/><rect x='13' y='12' width='15' height='3' fill='#1a4aa0'/>
 <path d='M23.5 1 L28 10 H19 Z' fill='#fff' stroke='#c02020' stroke-width='1.2'/><path d='M23.5 4 V7.5' stroke='#000' stroke-width='1.3'/>
</svg>
<div class='a' style='left:237px;top:488px;width:1px;height:11px;background:#a0a0a0'></div>
<div class='a' style='left:237px;top:499px;width:9px;height:1px;background:#a0a0a0'></div>
<svg style='left:246px;top:492px' width='28' height='14' viewBox='0 0 28 14'>
 <circle cx='5.5' cy='6' r='5.5' fill='#e0a0b8'/><path d='M4 1.5 V10.5 M7 1.5 V10.5' stroke='#a04060' stroke-width='1.2'/>
 <circle cx='19' cy='3.5' r='2.8' fill='#c07040'/><circle cx='19' cy='4' r='2' fill='#f4c8a0'/>
 <path d='M12.5 11 Q19 4 25.5 11 Z' fill='#1a5ab0'/><rect x='12' y='10' width='15' height='3' fill='#1a5ab0'/><path d='M13 11 H26' stroke='#a8d0f8' stroke-width='.7'/>
</svg>
<div class='a' style='left:869px;top:477px;width:12px;height:11px;border:1px solid #8f8f8f;background:linear-gradient(135deg,#dfe3ea,#f4f6f9)'></div>
<svg style='left:871px;top:478px' width='8' height='9' viewBox='0 0 8 9'><path d='M1 4.5 L3 7.5 L7 1' stroke='#2a4c96' stroke-width='1.6' fill='none'/></svg>
<!-- scrollbar -->
<div class='sb' style='left:228px;top:688px;width:751px'></div>
<svg style='left:233px;top:692px' width='4' height='6' viewBox='0 0 4 6'><path d='M4 0 V6 L0 3 Z' fill='#505050'/></svg>
<svg style='left:969px;top:692px' width='4' height='6' viewBox='0 0 4 6'><path d='M0 0 V6 L4 3 Z' fill='#202020'/></svg>
<div class='thumb' style='left:245px;top:688px;width:624px;height:15px'></div>
<div class='a' style='left:552px;top:692px;width:7px;height:6px;background:repeating-linear-gradient(90deg,#606060 0 1px,transparent 1px 3px)'></div>
<div class='t' style='left:249.7px;top:434.45px;font-size:11px;color:#1a1a1a;transform:scaleX(0.949);transform-origin:0 0;'>Типы данных</div><div class='t' style='left:342.5px;top:434.45px;font-size:11px;color:#1a1a1a;transform:scaleX(0.944);transform-origin:0 0;'>Критерии анализа</div><div class='t' style='left:457.3px;top:434.45px;font-size:11px;color:#1a1a1a;transform:scaleX(0.930);transform-origin:0 0;'>Права на сеанс</div><div class='t' style='left:234px;top:456.95px;font-size:13px;color:#222;transform:scaleX(0.999);transform-origin:0 0;'>Значение</div><div class='t' style='left:412px;top:456.95px;font-size:13px;color:#222;transform:scaleX(0.923);transform-origin:0 0;'>Тип</div><div class='t' style='left:588.8px;top:456.95px;font-size:13px;color:#222;transform:scaleX(0.968);transform-origin:0 0;'>Анализатор</div><div class='t' style='left:809.7px;top:456.95px;font-size:13px;color:#222;transform:scaleX(0.963);transform-origin:0 0;'>Ставить на контроль</div><div class='a' style='left:946px;top:452px;width:33px;height:19px;overflow:hidden'><div class='a' style='left:-946px;top:-452px;width:1000px;height:30px'><div class='t' style='left:951px;top:456.95px;font-size:13px;color:#222;'>Уведомлять</div></div></div><div class='t' style='left:261px;top:476.95px;font-size:13px;color:#1a1a1a;transform:scaleX(0.906);transform-origin:0 0;'>10.Поиск работы!=0</div><div class='t' style='left:409px;top:476.95px;font-size:13px;color:#1a1a1a;transform:scaleX(0.980);transform-origin:0 0;'>Категория документов</div><div class='t' style='left:583px;top:476.95px;font-size:13px;color:#8c8c8c;transform:scaleX(0.994);transform-origin:0 0;'>указать анализаторы</div><div class='t' style='left:274px;top:494.15px;font-size:13px;color:#1a1a1a;transform:scaleX(0.960);transform-origin:0 0;'>Отдел кадров</div><div class='t' style='left:409px;top:494.15px;font-size:13px;color:#1a1a1a;transform:scaleX(0.972);transform-origin:0 0;'>Сотрудник</div><div class='t' style='left:231.2px;top:511.95px;font-size:13px;color:#8c8c8c;transform:scaleX(0.981);transform-origin:0 0;'>добавить</div>
<div class='a' style='left:7px;top:717px;width:986px;height:21px;border-top:1px solid #a9a9a9;background:#f1edeb'></div>
<div class='a' style='left:7px;top:718px;width:986px;height:1px;background:#fdfcfc'></div>
<div class='t' style='left:8.8px;top:724.45px;font-size:11px;color:#1a1a1a;transform:scaleX(0.965);transform-origin:0 0;'>Готов</div><svg style='left:764px;top:720px' width='16' height='16' viewBox='0 0 16 16'><rect x='5' y='1' width='9' height='7' fill='#3a70e0'/><rect x='1' y='7' width='9' height='7' fill='#2a50c8'/><rect x='6' y='2' width='7' height='4' fill='#7aa8f8'/><rect x='2' y='8' width='7' height='4' fill='#5a88f0'/></svg><svg style='left:785px;top:720px' width='16' height='16' viewBox='0 0 16 16'><path d='M2 8 L4 4 H13 L15 8 Z' fill='#e0e0e0' stroke='#a8a8a8'/><rect x='1' y='8' width='14' height='5' fill='#c8c8c8' stroke='#909090'/><circle cx='11' cy='4.5' r='4' fill='#28a828'/><path d='M9 4.5 L10.6 6 L13.2 3' stroke='#fff' stroke-width='1.2' fill='none'/></svg><svg style='left:806px;top:720px' width='16' height='16' viewBox='0 0 16 16'><rect x='1.5' y='3' width='11' height='10' fill='#d0d0d0' stroke='#909090'/><ellipse cx='7' cy='3' rx='5.5' ry='2' fill='#e8e8e8' stroke='#909090'/><path d='M2 8 Q7 10 12 8' stroke='#909090' fill='none'/><circle cx='11' cy='4.5' r='4' fill='#28a828'/><path d='M9 4.5 L10.6 6 L13.2 3' stroke='#fff' stroke-width='1.2' fill='none'/></svg><svg style='left:826px;top:720px' width='16' height='16' viewBox='0 0 16 16'><circle cx='6.5' cy='9' r='5.5' fill='#a0a0a0'/><circle cx='6.5' cy='9' r='2.5' fill='#e0e0e0'/><path d='M1 13 H8' stroke='#9a70c0' stroke-width='2'/><circle cx='11' cy='4.5' r='4' fill='#28a828'/><path d='M9 4.5 L10.6 6 L13.2 3' stroke='#fff' stroke-width='1.2' fill='none'/></svg><svg style='left:847px;top:720px' width='16' height='16' viewBox='0 0 16 16'><rect x='1' y='5' width='14' height='9' fill='#2a9a4a'/><rect x='4' y='7' width='9' height='5' fill='#e8f0e8'/><circle cx='10' cy='4' r='3.5' fill='#fff' stroke='#606060'/><path d='M10 2.5 V4.5' stroke='#333'/></svg><svg style='left:867px;top:720px' width='16' height='16' viewBox='0 0 16 16'><rect x='1' y='2' width='13' height='9' fill='#303030'/><rect x='2' y='3' width='11' height='7' fill='#3a6a3a'/><path d='M7.5 11 V14 M3 14 H12' stroke='#505050' stroke-width='1.5'/><circle cx='11' cy='4.5' r='4' fill='#28a828'/><path d='M9 4.5 L10.6 6 L13.2 3' stroke='#fff' stroke-width='1.2' fill='none'/></svg><svg style='left:888px;top:720px' width='16' height='16' viewBox='0 0 16 16'><rect x='2' y='1' width='11' height='14' fill='#6a9ad0' stroke='#3a6aa0'/><rect x='7' y='5' width='6' height='9' fill='#e0e8f0'/><circle cx='11' cy='4.5' r='4' fill='#28a828'/><path d='M9 4.5 L10.6 6 L13.2 3' stroke='#fff' stroke-width='1.2' fill='none'/></svg><div class='a' style='left:982px;top:726px;width:9px;height:9px;background:radial-gradient(circle,#b8b8b8 0.8px,transparent 1px) 0 0/3px 3px;clip-path:polygon(100% 0,100% 100%,0 100%)'></div></body></html>
